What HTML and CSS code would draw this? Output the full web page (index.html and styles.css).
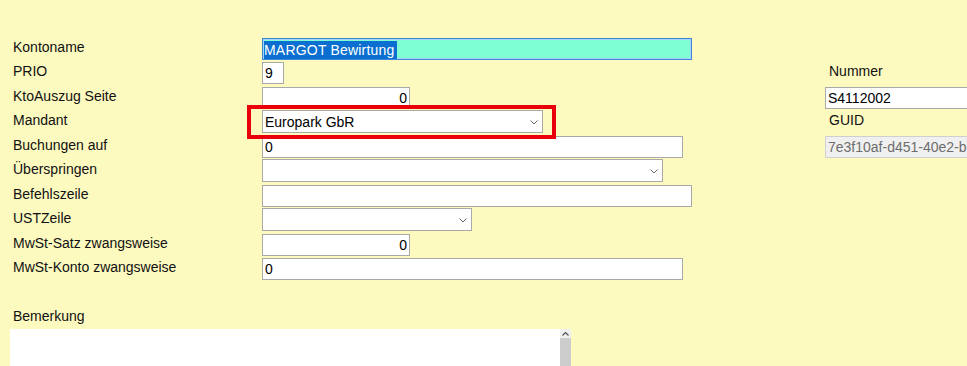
FILE: index.html
```html
<!DOCTYPE html>
<html lang="de">
<head>
    <meta charset="UTF-8">
    <title>Konto bearbeiten</title>
    <link rel="stylesheet" href="styles.css">
</head>
<body>
    <div class="form">
        <div class="grid">
            <label class="lbl">Kontoname</label>
            <div class="inp focus w-wide"><span class="sel">MARGOT Bewirtung</span></div>

            <label class="lbl">PRIO</label>
            <input class="inp w-prio" value="9">

            <label class="lbl">KtoAuszug Seite</label>
            <input class="inp num w-num" value="0">

            <label class="lbl">Mandant</label>
            <div class="combo marked w-mandant">
                <select class="sel-box"><option>Europark GbR</option></select>
                <svg class="chev" width="8" height="5" viewBox="0 0 8 5"><path d="M0.5 0.5 L4 4 L7.5 0.5" fill="none" stroke="#666" stroke-width="1"/></svg>
            </div>

            <label class="lbl">Buchungen auf</label>
            <input class="inp w-long" value="0">

            <label class="lbl">Überspringen</label>
            <div class="combo w-skip">
                <select class="sel-box"><option></option></select>
                <svg class="chev" width="8" height="5" viewBox="0 0 8 5"><path d="M0.5 0.5 L4 4 L7.5 0.5" fill="none" stroke="#666" stroke-width="1"/></svg>
            </div>

            <label class="lbl">Befehlszeile</label>
            <input class="inp w-wide" value="">

            <label class="lbl">USTZeile</label>
            <div class="combo w-ust">
                <select class="sel-box"><option></option></select>
                <svg class="chev" width="8" height="5" viewBox="0 0 8 5"><path d="M0.5 0.5 L4 4 L7.5 0.5" fill="none" stroke="#666" stroke-width="1"/></svg>
            </div>

            <label class="lbl">MwSt-Satz zwangsweise</label>
            <input class="inp num w-num" value="0">

            <label class="lbl">MwSt-Konto zwangsweise</label>
            <input class="inp w-long" value="0">

            <label class="lbl side row-2">Nummer</label>
            <input class="inp side-inp row-3" value="S4112002">
            <label class="lbl side row-4">GUID</label>
            <input class="inp side-inp guid row-5" value="7e3f10af-d451-40e2-b9a3-5c1d2e8f4a60" disabled>
        </div>

        <div class="remark">
            <label class="lbl">Bemerkung</label>
            <div class="memo">
                <textarea></textarea>
                <div class="vbar">
                    <div class="up">
                        <svg width="7" height="4" viewBox="0 0 7 4"><path d="M0.5 3.5 L3.5 0.5 L6.5 3.5" fill="none" stroke="#555" stroke-width="1.2"/></svg>
                    </div>
                    <div class="thumb"></div>
                </div>
            </div>
        </div>
    </div>
</body>
</html>
```

FILE: styles.css
```css
body {
    margin: 0;
    background-color: #fdfac0;
    font-family: "Liberation Sans", Arial, sans-serif;
    font-size: 14px;
    color: #000;
    overflow: hidden;
}

.form {
    padding: 37px 0 0 10px;
}

.grid {
    display: grid;
    grid-template-columns: 252px 563px 142px;
    grid-auto-rows: 24.45px;
    overflow: hidden;
}

.lbl {
    grid-column: 1;
    display: block;
    padding: 2px 0 0 3px;
    line-height: 16px;
    white-space: nowrap;
    color: #111;
}

.inp {
    grid-column: 2;
    justify-self: start;
    box-sizing: border-box;
    height: 22px;
    margin-top: 1px;
    padding: 0 2px;
    border: 1px solid #a9a9a9;
    background: white;
    font-family: inherit;
    font-size: 14px;
    line-height: 20px;
    color: #000;
    outline: none;
}

.num {
    text-align: right;
}

.focus {
    border-color: #3f86d8;
    box-shadow: inset 0 0 0 1px #a9d2f7;
    background-color: #7fffd4;
    padding: 1px 1px;
}

.sel {
    display: inline-block;
    background-color: #0a6fd1;
    color: white;
    line-height: 18px;
    padding-right: 2px;
    letter-spacing: 0.2px;
}

.w-prio { width: 22px; }
.w-num { width: 148px; }
.w-long { width: 421px; }
.w-wide { width: 430px; }
.w-mandant { width: 281px; }
.w-skip { width: 401px; }
.w-ust { width: 210px; }

.combo {
    grid-column: 2;
    justify-self: start;
    position: relative;
    height: 23px;
}

.sel-box {
    -webkit-appearance: none;
    appearance: none;
    box-sizing: border-box;
    width: 100%;
    height: 23px;
    margin: 0;
    padding: 0 18px 0 2px;
    border: 1px solid #a9a9a9;
    border-radius: 0;
    background: white;
    font-family: inherit;
    font-size: 14px;
    color: #000;
}

.chev {
    position: absolute;
    right: 5px;
    top: 10px;
}

/* red annotation frame round the Mandant box */
.marked::after {
    content: '';
    position: absolute;
    left: -15px;
    top: -5px;
    right: -13px;
    bottom: -6px;
    border: 4px solid #e8000b;
    pointer-events: none;
}

.side {
    grid-column: 3;
    padding-left: 4px;
}

.side-inp {
    grid-column: 3;
    width: 170px;
}

.guid {
    background-color: #f0f0f0;
    border-color: #cfcfcf;
    color: #6d6d6d;
}

.row-2 { grid-row: 2; }
.row-3 { grid-row: 3; }
.row-4 { grid-row: 4; }
.row-5 { grid-row: 5; }

.remark {
    margin-top: 27px;
}

.remark .lbl {
    padding: 0 0 0 3px;
}

.memo {
    display: flex;
    width: 561px;
    height: 37px;
    margin-top: 5px;
    background: white;
}

.memo textarea {
    flex: 1;
    border: none;
    resize: none;
    outline: none;
    margin: 0;
    padding: 2px;
    font-family: inherit;
    font-size: 14px;
}

.vbar {
    width: 11px;
    display: flex;
    flex-direction: column;
}

.vbar .up {
    height: 9px;
    background: #f0f0f0;
    display: flex;
    justify-content: center;
    align-items: center;
}

.vbar .thumb {
    flex: 1;
    background: #cdcdcd;
}
```
